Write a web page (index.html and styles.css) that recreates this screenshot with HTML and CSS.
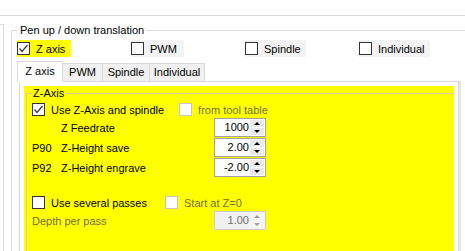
FILE: index.html
```html
<!DOCTYPE html>
<html lang="en">
<head>
    <meta charset="UTF-8">
    <meta name="viewport" content="width=device-width, initial-scale=1.0">
    <title>Pen up / down translation</title>
    <link rel="stylesheet" href="styles.css">
</head>
<body>
    <div class="topbar"></div>
    <div class="main">
        <div class="stub"></div>
        <div class="content">
            <fieldset class="pen">
                <legend>Pen up / down translation</legend>

                <div class="modes">
                    <label class="check mode active w-z">
                        <span class="box"><svg viewBox="0 0 11 11"><polyline points="1.5,5.5 4,8.5 9.5,2"/></svg></span>Z axis
                    </label>
                    <label class="check mode w-pwm"><span class="box"></span>PWM</label>
                    <label class="check mode w-spindle"><span class="box"></span>Spindle</label>
                    <label class="check mode w-ind"><span class="box"></span>Individual</label>
                </div>

                <div class="tabs">
                    <div class="tabstrip">
                        <span class="tab selected t-z">Z axis</span>
                        <span class="tab t-pwm">PWM</span>
                        <span class="tab t-spindle">Spindle</span>
                        <span class="tab t-ind">Individual</span>
                    </div>
                    <div class="tabpage">
                        <div class="yellow">
                            <fieldset class="zaxis">
                                <legend>Z-Axis</legend>

                                <div class="row first">
                                    <label class="check">
                                        <span class="box"><svg viewBox="0 0 11 11"><polyline points="1.5,5.5 4,8.5 9.5,2"/></svg></span>Use Z-Axis and spindle
                                    </label>
                                    <label class="check disabled tooltable"><span class="box"></span>from tool table</label>
                                </div>

                                <div class="values">
                                    <span></span>
                                    <span>Z Feedrate</span>
                                    <div class="num"><span class="val">1000</span><span class="spin"><i class="up"></i><i class="down"></i></span></div>

                                    <span>P90</span>
                                    <span>Z-Height save</span>
                                    <div class="num"><span class="val">2.00</span><span class="spin"><i class="up"></i><i class="down"></i></span></div>

                                    <span>P92</span>
                                    <span>Z-Height engrave</span>
                                    <div class="num"><span class="val">-2.00</span><span class="spin"><i class="up"></i><i class="down"></i></span></div>
                                </div>

                                <div class="row passes">
                                    <label class="check"><span class="box"></span>Use several passes</label>
                                    <label class="check disabled startz"><span class="box"></span>Start at Z=0</label>
                                </div>

                                <div class="values depth">
                                    <span class="dim">Depth per pass</span>
                                    <div class="num off"><span class="val">1.00</span><span class="spin"><i class="up"></i><i class="down"></i></span></div>
                                </div>
                            </fieldset>
                        </div>
                    </div>
                </div>
            </fieldset>
        </div>
    </div>
</body>
</html>
```

FILE: styles.css
```css
html, body {
    height: 251px;
    overflow: hidden;
}
body {
    margin: 0;
    background-color: #ffffff;
    font-family: "Liberation Sans", Arial, sans-serif;
    font-size: 11px;
    color: #000000;
}
.topbar {
    height: 15px;
    border-bottom: 1px solid #dadada;
}
.main {
    display: flex;
    margin-top: 7px;
}
.stub {
    width: 3px;
    margin-top: 1px;
    border-top: 1px solid #dadada;
    border-right: 1px solid #dadada;
    height: 226px;
}
.content {
    flex: 1;
    padding-left: 7px;
    overflow: hidden;
}
fieldset {
    margin: 0;
    min-width: 0;
}
legend {
    line-height: 14px;
}
.pen {
    border: 1px solid #dcdcdc;
    border-right: none;
    border-bottom: none;
    padding: 3px 0 0 5px;
}
.pen > legend {
    padding: 0 2px 0 3px;
}

/* checkboxes */
.check {
    display: flex;
    align-items: center;
    gap: 6px;
    height: 17px;
    white-space: nowrap;
}
.box {
    width: 11px;
    height: 11px;
    border: 1px solid #333333;
    background-color: #ffffff;
    flex: none;
    display: flex;
}
.box svg {
    width: 11px;
    height: 11px;
}
.box polyline {
    fill: none;
    stroke: #3c3c3c;
    stroke-width: 1.3;
}
.check.disabled {
    color: #72723c;
}
.check.disabled .box {
    border-color: #c4c4c4;
}

.modes {
    display: grid;
    grid-template-columns: 114px 114px 114px 114px;
}
.mode {
    background-color: #f3f3f3;
}
.mode.active {
    background-color: #ffff00;
}
.w-z { width: 54px; }
.w-pwm { width: 53px; }
.w-spindle { width: 61px; }
.w-ind { width: 71px; }

/* tabs */
.tabs {
    margin-top: 4px;
}
.tabstrip {
    display: flex;
    align-items: flex-end;
    height: 20px;
}
.tab {
    box-sizing: border-box;
    height: 18px;
    border: 1px solid #d9d9d9;
    border-bottom: none;
    background-color: #f0f0f0;
    margin-left: -1px;
    text-align: center;
    line-height: 17px;
}
.tab.selected {
    position: relative;
    z-index: 1;
    height: 21px;
    margin-left: 0;
    margin-bottom: -1px;
    background-color: #ffffff;
    line-height: 19px;
}
.t-z { width: 46px; }
.t-pwm { width: 41px; }
.t-spindle { width: 48px; }
.t-ind { width: 56px; }

.tabpage {
    margin-left: 2px;
    margin-right: 6px;
    border: 1px solid #d9d9d9;
    border-bottom: none;
    padding: 4px 4px 0 4px;
    background-color: #ffffff;
    box-shadow: 2px 0 0 #e6e6e6;
}
.yellow {
    background-color: #ffff00;
    height: 165px;
    overflow: hidden;
    padding-left: 2px;
}
.zaxis {
    border: 1px solid #d0d0a0;
    margin-right: -10px;
    padding: 0 0 0 5px;
    height: 200px;
}
.zaxis > legend {
    padding: 0 1px;
}

.row {
    display: flex;
}
.row.first {
    margin-top: 1px;
}
.tooltable {
    margin-left: 15px;
}
.row.passes {
    margin-top: 17px;
}
.startz {
    margin-left: 18px;
}

/* numeric fields */
.values {
    display: grid;
    grid-template-columns: 29px 153px 52px;
    row-gap: 1px;
    align-items: center;
}
.values.depth {
    grid-template-columns: 182px 52px;
}
.dim {
    color: #72723c;
}
.num {
    box-sizing: border-box;
    height: 19px;
    border: 1px solid #a0a0a0;
    background-color: #ffffff;
    display: flex;
    padding: 1px;
}
.val {
    flex: 1;
    text-align: right;
    line-height: 15px;
    padding-right: 1px;
}
.spin {
    width: 14px;
    display: flex;
    flex-direction: column;
    gap: 1px;
}
.spin i {
    flex: 1;
    background-color: #e9e9e9;
    display: flex;
    align-items: center;
    justify-content: center;
}
.spin i::after {
    content: "";
    border-left: 3px solid transparent;
    border-right: 3px solid transparent;
}
.spin .up::after {
    border-bottom: 3px solid #000000;
}
.spin .down::after {
    border-top: 3px solid #000000;
}
.num.off {
    background-color: #f0f0f0;
    border-color: #cccccc;
}
.num.off .val {
    color: #6d6d6d;
}
.num.off .spin i {
    background-color: #f4f4f4;
}
.num.off .spin .up::after {
    border-bottom-color: #a0a0a0;
}
.num.off .spin .down::after {
    border-top-color: #a0a0a0;
}
```
